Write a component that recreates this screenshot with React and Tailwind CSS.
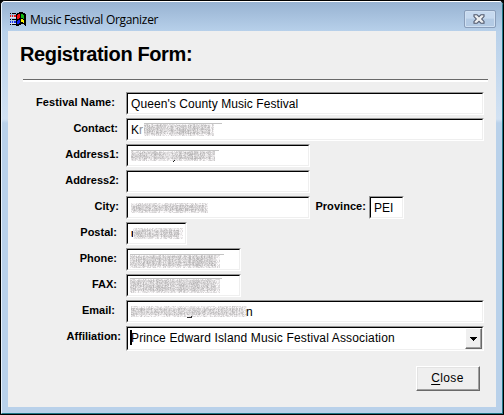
import React from "react";

// Small deterministic generator so obscured values look the same on each render.
// Each cell mixes fine grain with a stronger vertical tone, like blurred letter stems.
function grain(w, h, seed) {
  let s = seed * 7919 + 17;
  const next = () => {
    s = (s * 1103515245 + 12345) % 2147483648;
    return s / 2147483648;
  };
  const stems = Array.from({ length: w }, () => next() * 26);
  const cells = [];
  for (let y = 0; y < h; y++) {
    for (let x = 0; x < w; x++) {
      const edge = y < 2 || y > h - 3 || x > w - 5 ? 18 : 0;
      const v = Math.min(253, Math.round(178 + next() * 44 + stems[x] + edge));
      cells.push(<rect key={x + "-" + y} x={x} y={y} width="1" height="1" fill={`rgb(${v},${v - 2},${v - 1})`} />);
    }
  }
  return cells;
}

function Smudge({ w, h, seed, className = "", line = 0, children }) {
  return (
    <svg className={"shrink-0 overflow-visible " + className} width={w + line} height={h} shapeRendering="crispEdges">
      {grain(w, h, seed)}
      {line > 0 && <rect x="0" y="0" width={w + line} height="1" fill="#c4c4c4" />}
      {children}
    </svg>
  );
}

function Label({ children, className }) {
  return (
    <span className={"flex h-[20px] shrink-0 items-center justify-end whitespace-nowrap text-[11px] font-bold " + className}>
      {children}
    </span>
  );
}

function Field({ className, children }) {
  return (
    <div className={"shrink-0 border border-t-[#969696] border-l-[#969696] border-r-white border-b-white " + className}>
      <div className="flex h-full items-start overflow-hidden border border-t-black border-l-black border-r-[#efefef] border-b-[#efefef] bg-white pl-[3px] text-[12px] leading-[21px] whitespace-nowrap">
        {children}
      </div>
    </div>
  );
}

function Row({ label, labelClass, children }) {
  return (
    <div className="flex h-[26px] items-start">
      <div className="flex w-[118px] shrink-0 justify-start">
        <Label className={labelClass}>{label}</Label>
      </div>
      {children}
    </div>
  );
}

function WindowsLogo() {
  return (
    <svg width="17" height="15" viewBox="0 0 17 15" shapeRendering="crispEdges">
      <path d="M7 2h1V1h2V0h4v1h2v1h1v12h-1v-1h-1v-1h-3v1h-2v1H7z" fill="#000" />
      <path d="M9 2h2v4h-1v1H8V3h1z" fill="#f01010" />
      <path d="M12 2h2v1h1v4h-1V6h-2z" fill="#10b810" />
      <path d="M9 8h2v3h-1v1H8V9h1z" fill="#1020f0" />
      <path d="M12 7h2v1h1v3h-1v-1h-2z" fill="#f8f000" />
      <path d="M1 1h1v1H1zM3 1h4v1H3zM1 7h1v1H1zM3 7h4v1H3zM1 12h1v1H1zM3 12h4v1H3z" fill="#000" />
      <path d="M1 3h1v2H1zM3 3h1v2H3zM5 3h2v2H5z" fill="#f01818" />
      <path d="M1 9h1v2H1zM3 9h1v2H3zM5 9h2v2H5z" fill="#1830f0" />
      <path d="M1 5h6v1H1zM1 11h6v1H1z" fill="#dce0f0" />
    </svg>
  );
}

export default function App() {
  return (
    <div className="h-[415px] w-[504px] bg-black font-['Liberation_Sans',Arial,sans-serif] text-black">
      <div className="flex h-[415px] flex-col overflow-hidden rounded-t-[5px] border border-black bg-[#b9d1ea]">
        <div className="flex h-[413px] flex-col overflow-hidden rounded-t-[4px] border-t border-r border-b border-l border-t-white border-r-[#207888] border-b-[#207888] border-l-[#e9f2fb]">
          <header className="flex h-[29px] shrink-0 items-start bg-gradient-to-b from-[#98b3d2] to-[#b7d0ea] pl-[7px]">
            <div className="mt-[10px] w-[21px]">
              <WindowsLogo />
            </div>
            <h1 className="mt-[9px] font-['Open_Sans','Noto_Sans',sans-serif] text-[12px] leading-[17px] tracking-[-0.31px]">Music Festival Organizer</h1>
            <button className="mt-[8px] mr-[6px] ml-auto flex h-[18px] w-[32px] items-center justify-center rounded-[2px] border border-[#899db9] bg-gradient-to-b from-[#c6d9ef] from-45% to-[#b3cae4] to-50% shadow-[inset_0_0_0_1px_#d0e0f2]">
              <svg className="-mt-[1px] -ml-[2px]" width="12" height="10" viewBox="0 0 12 10">
                <path d="M1 .7h3l2 2 2-2h3v1.8L8.7 5 11 7.5v1.8H8l-2-2-2 2H1V7.5L3.300 5 1 2.500z" fill="#eceef0" stroke="#50586c" strokeWidth="1.100" />
              </svg>
            </button>
          </header>
          <div className="flex min-h-0 flex-1">
            <div className="w-[6px] shrink-0 bg-gradient-to-b from-[#b9d1ea] from-0% via-[#d2e2f3] via-[88px] to-[#b9d1ea] to-[92px]" />
            <main className="h-[376px] w-[488px] shrink-0 bg-[#efefef]">
              <h2 className="h-[48px] pt-[11px] pl-[12px] text-[20px] leading-[24px] font-bold tracking-[-0.37px]">Registration Form:</h2>
              <div className="ml-[15px] h-[3px] w-[465px] border-t border-t-[#696969] bg-white" />
              <form className="mt-[10px]">
                <Row label="Festival Name:" labelClass="w-[107px] tracking-[0.1px]">
                  <Field className="h-[23px] w-[358px]"><span className="tracking-[0.08px]">Queen's County Music Festival</span></Field>
                </Row>
                <Row label="Contact:" labelClass="w-[110px]">
                  <Field className="h-[23px] w-[358px]">
                    <span>K</span>
                    <span className="w-[5px] text-[#8c8c8c]">r</span>
                    <Smudge w={70} h={13} seed={2} line={8} className="mt-[3px]" />
                  </Field>
                </Row>
                <Row label="Address1:" labelClass="w-[111px]">
                  <Field className="h-[23px] w-[184px]">
                    <Smudge w={84} h={11} seed={3} line={4} className="mt-[4px]">
                      <path d="M43 10h1v1h-1zM42 11h1v1h-1z" fill="#202020" />
                    </Smudge>
                  </Field>
                </Row>
                <Row label="Address2:" labelClass="w-[111px]">
                  <Field className="h-[23px] w-[184px]" />
                </Row>
                <Row label="City:" labelClass="w-[111px]">
                  <Field className="h-[23px] w-[184px]"><Smudge w={77} h={10} seed={4} className="mt-[5px]" /></Field>
                  <Label className="w-[56px] tracking-[0.05px]">Province:</Label>
                  <Field className="ml-[3px] h-[23px] w-[35px]"><span>PEI</span></Field>
                </Row>
                <Row label="Postal:" labelClass="w-[109px]">
                  <Field className="h-[23px] w-[61px]">
                    <Smudge w={52} h={11} seed={5} className="mt-[4px]">
                      <rect x="0" y="0" width="2" height="3" fill="#fff" />
                      <rect x="0" y="9" width="2" height="2" fill="#fff" />
                      <rect x="0" y="3" width="1" height="5" fill="#e09a50" />
                      <rect x="1" y="3" width="1" height="6" fill="#10184c" />
                    </Smudge>
                  </Field>
                </Row>
                <Row label="Phone:" labelClass="w-[109px]">
                  <Field className="h-[23px] w-[115px]"><Smudge w={90} h={14} seed={6} line={4} className="-ml-[1px] mt-[4px]" /></Field>
                </Row>
                <Row label="FAX:" labelClass="w-[109px]">
                  <Field className="h-[23px] w-[115px]"><Smudge w={90} h={15} seed={7} line={2} className="-ml-[1px] mt-[2px]" /></Field>
                </Row>
                <Row label="Email:" labelClass="w-[107px]">
                  <Field className="h-[23px] w-[358px]">
                    <Smudge w={116} h={11} seed={8} className="mt-[4px]">
                      <path d="M56 11h5v1h-5zM60 10h1v1h-1z" fill="#303030" />
                    </Smudge>
                    <span className="-ml-[1px]">n</span>
                  </Field>
                </Row>
                <Row label="Affiliation:" labelClass="w-[113px]">
                  <Field className="h-[25px] w-[358px]">
                    <span className="mt-[2px] -ml-[1px] h-[15px] w-[2px] shrink-0 bg-black" />
                    <span className="-ml-[1px] tracking-[0.15px]">Prince Edward Island Music Festival Association</span>
                    <span className="ml-auto flex h-[21px] w-[17px] shrink-0 items-center justify-center border border-t-white border-r-[#696969] border-b-[#696969] border-l-white bg-[#efefef] shadow-[inset_-1px_-1px_0_#a0a0a0]">
                      <svg width="7" height="4" shapeRendering="crispEdges"><path d="M0 0h7v1H0zM1 1h5v1H1zM2 2h3v1H2zM3 3h1v1H3z" /></svg>
                    </span>
                  </Field>
                </Row>
              </form>
              <div className="mt-[14px] flex justify-end pr-[16px]">
                <button className="h-[25px] w-[64px] border border-t-white border-r-[#696969] border-b-[#696969] border-l-white bg-[#efefef] pr-[1px] text-[12px] leading-[23px] tracking-[0.4px] shadow-[inset_-1px_-1px_0_#a0a0a0,inset_1px_1px_0_#e3e3e3]">
                  <span className="underline underline-offset-2">C</span>lose
                </button>
              </div>
            </main>
            <div className="flex-1 bg-gradient-to-b from-[#b9d1ea] via-[#d2e2f3] via-[88px] to-[#b9d1ea] to-[92px]" />
          </div>
          <div className="h-[6px] shrink-0 bg-[#b9d1ea]" />
        </div>
      </div>
    </div>
  );
}
